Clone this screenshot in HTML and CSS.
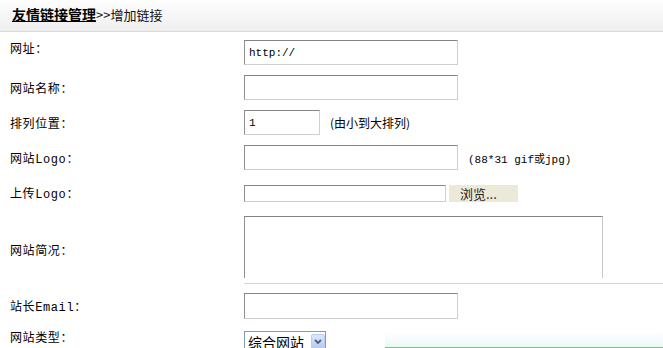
FILE: index.html
```html
<!DOCTYPE html>
<html lang="zh-CN">
  <head>
    <meta charset="UTF-8" />
    <title>增加链接</title>
    <link rel="stylesheet" href="styles.css">
  </head>
  <body>
    <div class="header">
      <a class="header-title" href="#">友情链接管理</a><span class="header-sub">&gt;&gt;增加链接</span>
    </div>

    <form class="form">
      <div class="row row-first">
        <label class="label label-top">网址：</label>
        <input type="text" class="field" value="http://" />
      </div>
      <div class="row">
        <label class="label">网站名称：</label>
        <input type="text" class="field" />
      </div>
      <div class="row">
        <label class="label">排列位置：</label>
        <input type="text" class="field field-short" value="1" />
        <span class="hint">(由小到大排列)</span>
      </div>
      <div class="row">
        <label class="label">网站Logo：</label>
        <input type="text" class="field" />
        <span class="hint hint-mono">(88*31 gif或jpg)</span>
      </div>
      <div class="row row-upload">
        <label class="label">上传Logo：</label>
        <input type="text" class="field field-file" />
        <button type="button" class="browse">浏览...</button>
      </div>
      <div class="row row-area">
        <label class="label">网站简况：</label>
        <div class="area-wrap">
          <textarea class="area"></textarea>
        </div>
      </div>
      <div class="row row-email">
        <label class="label">站长Email：</label>
        <input type="text" class="field field-tall" />
      </div>
      <div class="row row-last">
        <label class="label">网站类型：</label>
        <span class="select-wrap">
          <select class="select">
            <option>综合网站</option>
          </select>
          <svg class="select-arrow" width="14" height="15" viewBox="0 0 14 15">
            <defs>
              <linearGradient id="arr" x1="0" y1="0" x2="0" y2="1">
                <stop offset="0" stop-color="#dfe9fb" />
                <stop offset="1" stop-color="#b4c8f0" />
              </linearGradient>
            </defs>
            <rect x="0.5" y="0.5" width="13" height="14" rx="1.5" fill="url(#arr)" stroke="#b9cbf2" />
            <path d="M4 6 L7 9 L10 6" fill="none" stroke="#4d6185" stroke-width="1.8" />
          </svg>
        </span>
        <div class="panel"></div>
      </div>
    </form>
  </body>
</html>
```

FILE: styles.css
```css
* {
  box-sizing: border-box;
}
body {
  margin: 0;
  background: #fff;
  color: #000;
  font-family: "Liberation Mono", "Noto Sans CJK SC", monospace;
  font-size: 12px;
  overflow: hidden;
}
.header {
  height: 32px;
  line-height: 28px;
  padding-left: 12px;
  background: linear-gradient(#fefefe, #eeeeee);
  border-bottom: 1px solid #d9d9d9;
  font-family: "Noto Sans CJK SC", sans-serif;
}
.header-title {
  font-size: 14px;
  font-weight: bold;
  color: #000;
  text-decoration: underline;
}
.header-sub {
  font-size: 13px;
  color: #111;
}
.form {
  display: flex;
  flex-direction: column;
  padding: 8px 0 0 10px;
  margin: 0;
}
.row {
  display: flex;
  align-items: center;
  margin-bottom: 10px;
}
.label {
  width: 234px;
  flex-shrink: 0;
  font-size: 12px;
  letter-spacing: 0.6px;
}
.label-top {
  position: relative;
  top: -5px;
}
.field {
  width: 214px;
  height: 25px;
  padding: 0 4px;
  margin: 0;
  border: 1px solid;
  border-color: #858585 #cfcfcf #cfcfcf #8f8f8f;
  font-family: "Liberation Mono", monospace;
  font-size: 11px;
  background: #fff;
}
.field-short {
  width: 76px;
}
.field-file {
  width: 202px;
  height: 17px;
}
.field-tall {
  height: 26px;
}
.hint {
  margin-left: 10px;
  font-family: "Noto Sans CJK SC", sans-serif;
  font-size: 12px;
}
.hint-mono {
  font-family: "Liberation Mono", "Noto Sans CJK SC", monospace;
  font-size: 11px;
}
.row-upload {
  margin-top: 4px;
  margin-bottom: 14px;
}
.browse {
  width: 69px;
  height: 17px;
  margin-left: 3px;
  padding: 0 0 0 11px;
  border: none;
  background: #ece9d8;
  font-family: "Noto Sans CJK SC", sans-serif;
  font-size: 13px;
  line-height: 17px;
  text-align: left;
  color: #222;
}
.row-area {
  margin-bottom: 9px;
}
.area-wrap {
  flex: 1;
  height: 68px;
  border-bottom: 1px solid #d6d6d6;
}
.area {
  display: block;
  width: 359px;
  height: 62px;
  margin: 0;
  resize: none;
  border: 1px solid;
  border-bottom: none;
  border-color: #858585 #c8c8c8 #c8c8c8 #8f8f8f;
}
.row-email {
  margin-bottom: 12px;
}
.row-last {
  align-items: flex-start;
}
.row-last .label {
  line-height: 14px;
  margin-top: 1px;
}
.select-wrap {
  position: relative;
  display: inline-block;
}
.select {
  width: 82px;
  height: 20px;
  padding: 0 0 0 3px;
  margin: 0;
  appearance: none;
  border: 1px solid #7f9db9;
  background: #fff;
  font-family: "Noto Sans CJK SC", sans-serif;
  font-size: 14px;
  color: #000;
}
.select-arrow {
  position: absolute;
  top: 3px;
  right: 1px;
}
.panel {
  flex: 1;
  height: 18px;
  margin-left: 59px;
  background: linear-gradient(#ffffff, #f4fbfb 60%, #eaf8f5);
  border-bottom: 2px solid #6cc497;
}
```
